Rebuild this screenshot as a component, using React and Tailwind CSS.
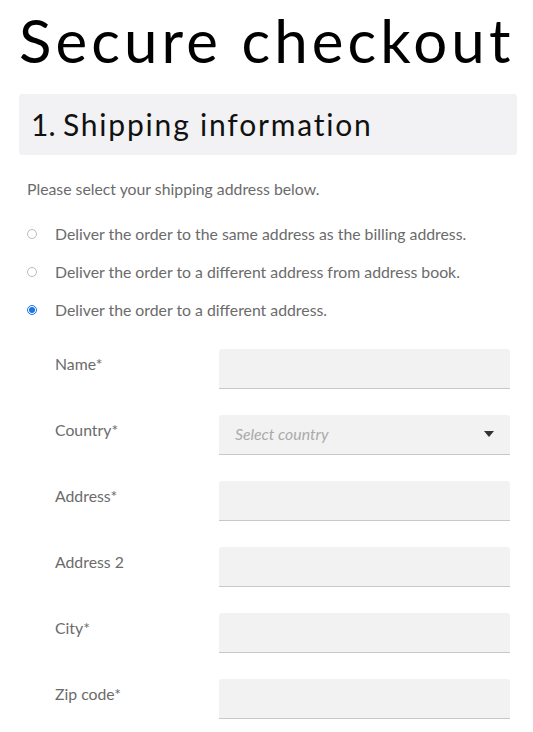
const FIELDS = [
  { label: 'Name*' },
  { label: 'Country*', select: true },
  { label: 'Address*' },
  { label: 'Address 2' },
  { label: 'City*' },
  { label: 'Zip code*' },
];

const OPTIONS = [
  'Deliver the order to the same address as the billing address.',
  'Deliver the order to a different address from address book.',
  'Deliver the order to a different address.',
];

export default function App() {
  return (
    <div className="min-h-screen bg-white px-[19px] font-['Lato','Liberation_Sans',sans-serif]">
      <h1 className="pt-[5px] text-[60px] leading-[70px] font-normal tracking-[4.1px] whitespace-nowrap text-black">
        Secure checkout
      </h1>

      {/* Section header */}
      <div className="mt-[19px] w-[498px] h-[61px] bg-[#f2f2f4] rounded-[3px] flex items-center px-3">
        <h2 className="text-[30px] font-normal text-[#111] flex whitespace-nowrap">
          <span className="w-[32px]">1.</span>
          <span className="tracking-[1.8px]">Shipping information</span>
        </h2>
      </div>

      <p className="mt-[22px] ml-2 text-[15.8px] text-[#6b6b6b]">
        Please select your shipping address below.
      </p>

      <div className="mt-[21px] ml-[8px] flex flex-col gap-[14px]">
        {OPTIONS.map((opt, i) => (
          <label key={opt} className="flex items-center text-[15.8px] text-[#6b6b6b] h-[24px]">
            <span
              className={`w-[10px] h-[10px] rounded-full border mr-[18px] flex items-center justify-center ${
                i === 2 ? 'border-[#1a73e8]' : 'border-[#bbb]'
              }`}
            >
              {i === 2 && <span className="w-[6px] h-[6px] rounded-full bg-[#1a73e8]" />}
            </span>
            {opt}
          </label>
        ))}
      </div>

      <div className="mt-[27px] flex flex-col gap-[26px]">
        {FIELDS.map((f) => (
          <div key={f.label} className="flex items-start">
            <div className="w-[200px] pl-[36px] pt-[3px] text-[15.8px] text-[#6b6b6b]">{f.label}</div>
            <div className="w-[291px] h-[40px] bg-[#f2f2f2] border-b border-[#c8c8c8] rounded-t-[3px] flex items-center px-4">
              {f.select && (
                <>
                  <span className="flex-1 italic text-[15.8px] text-[#aaa]">Select country</span>
                  <svg width="10" height="6" viewBox="0 0 10 6">
                    <path d="M0 0h10L5 6z" fill="#333" />
                  </svg>
                </>
              )}
            </div>
          </div>
        ))}
      </div>
    </div>
  );
}
